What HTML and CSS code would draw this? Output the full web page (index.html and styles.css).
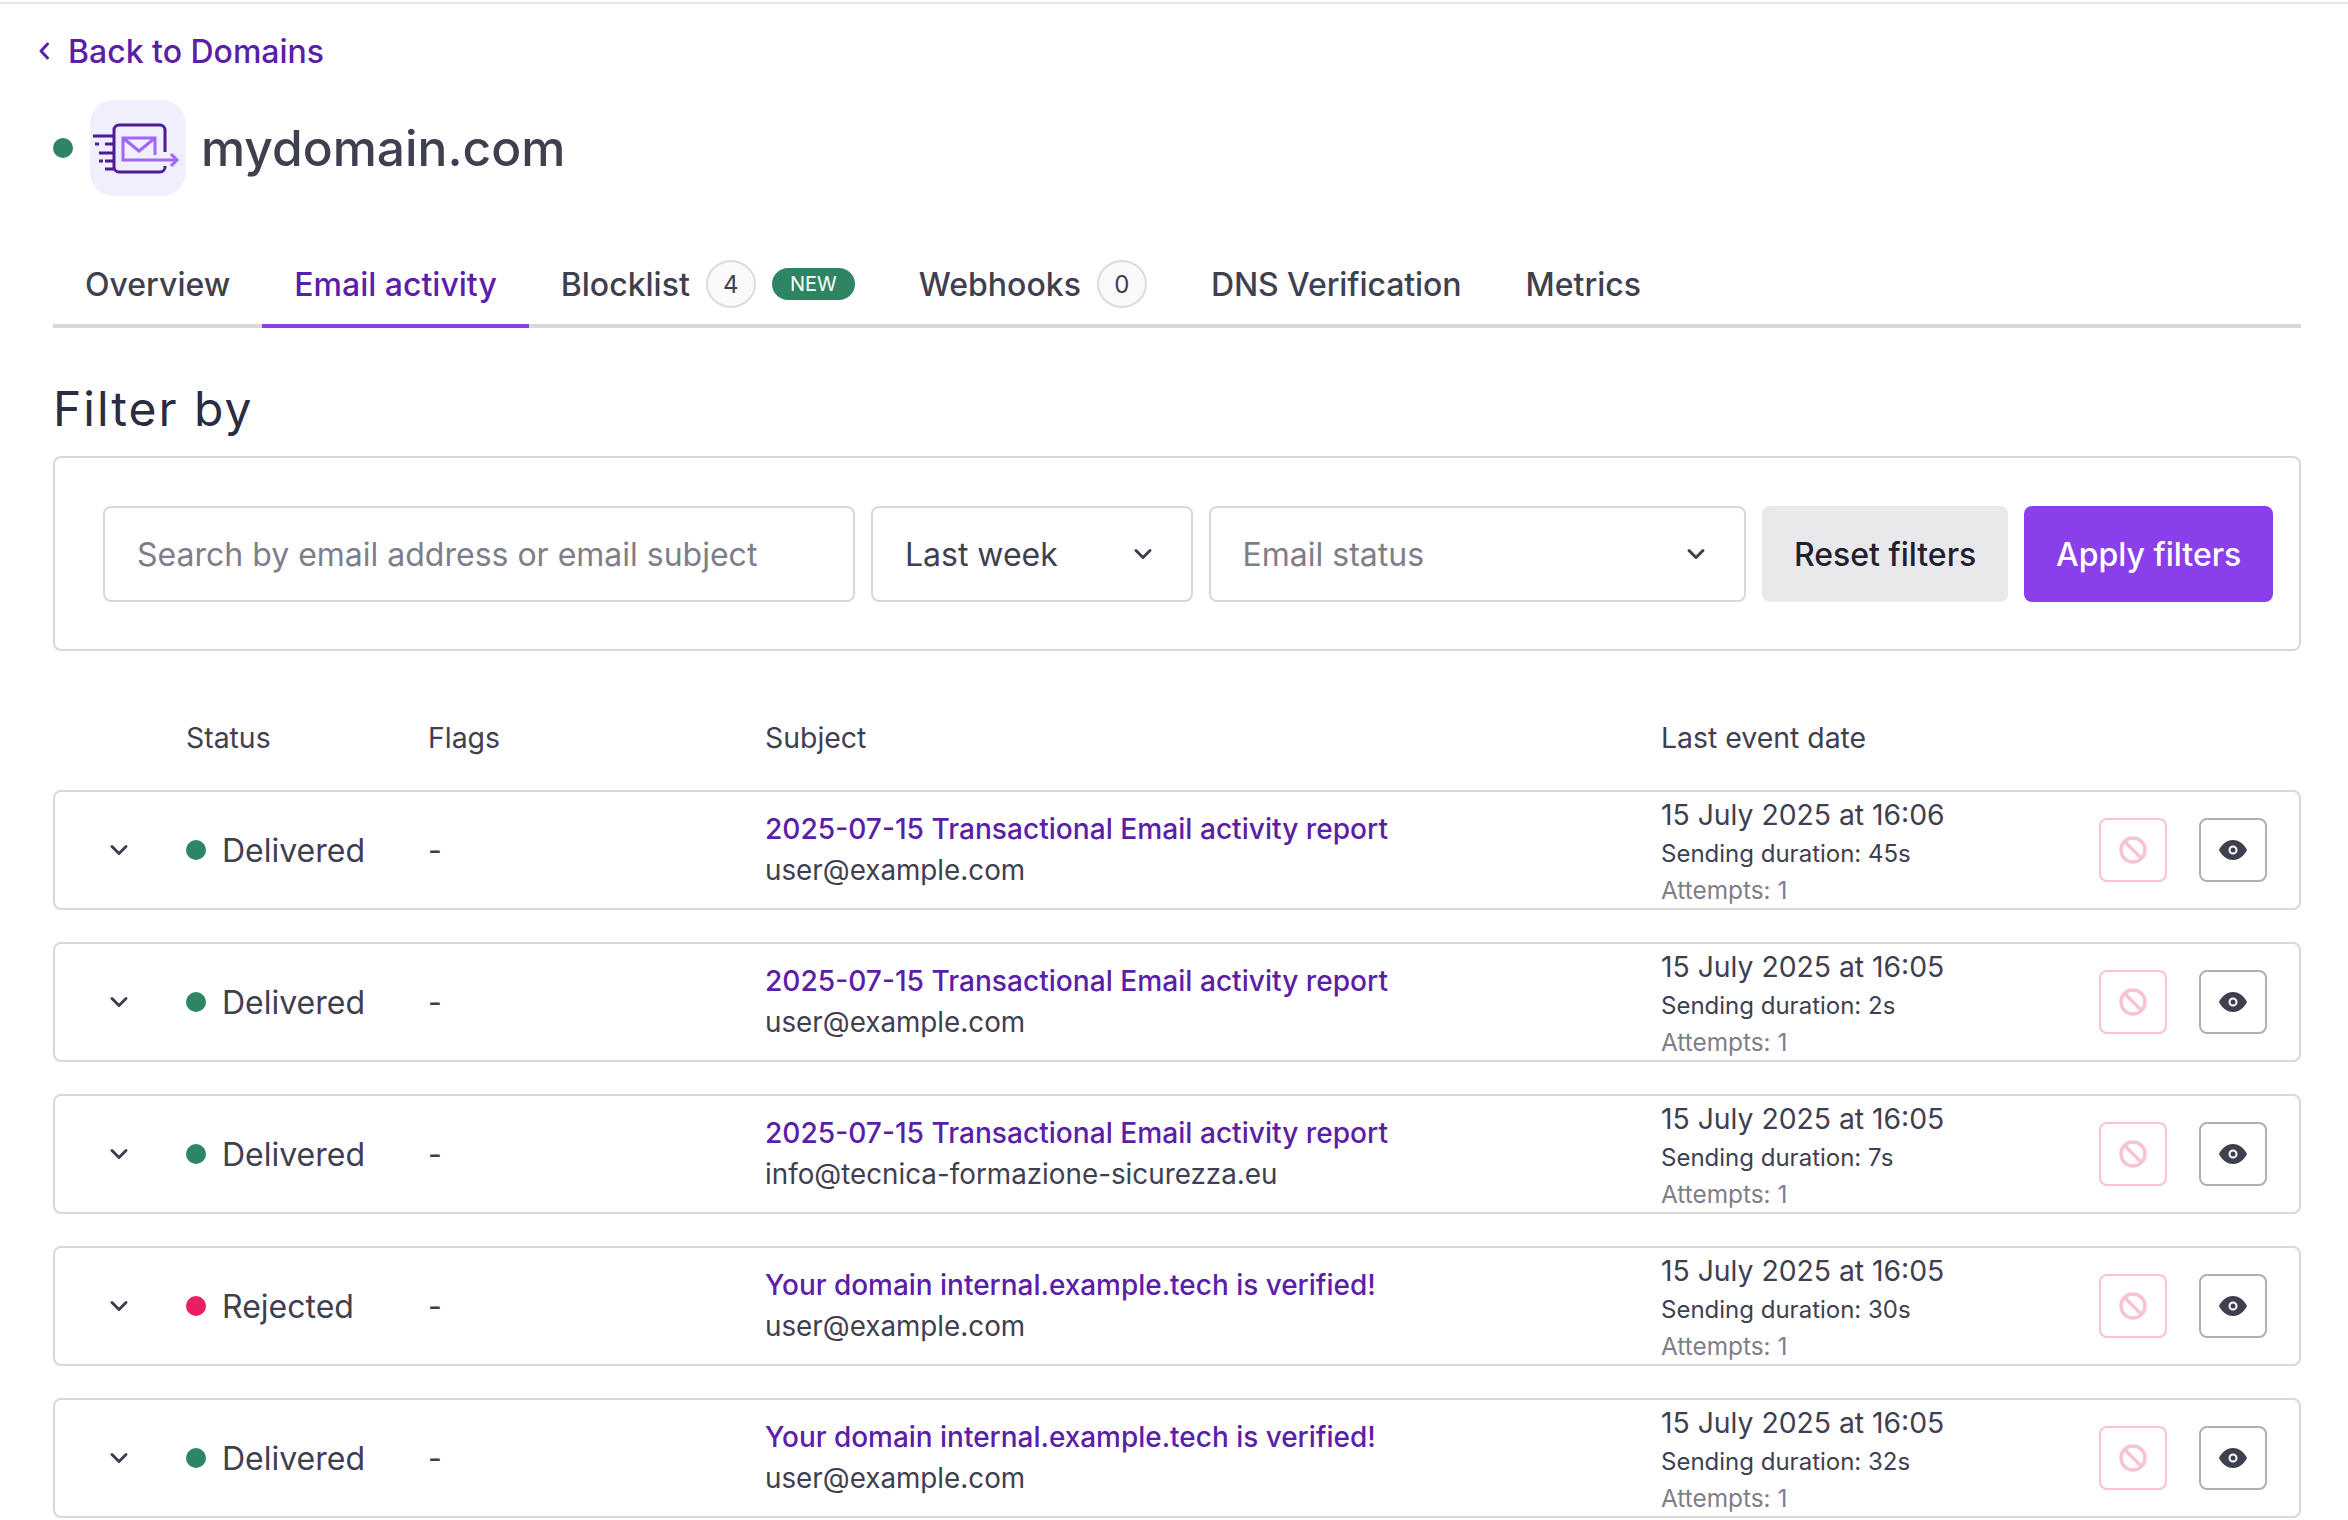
FILE: index.html
```html
<!DOCTYPE html>
<html lang="en">
<head>
<meta charset="utf-8">
<title>mydomain.com</title>
<link rel="stylesheet" href="styles.css">
</head>
<body>
<svg class="defs" width="0" height="0" aria-hidden="true">
  <symbol id="chev" viewBox="0 0 24 24"><path d="M5 8.5l7 7 7-7" fill="none" stroke="currentColor" stroke-width="3" stroke-linecap="round" stroke-linejoin="round"/></symbol>
  <symbol id="ban" viewBox="0 0 28 28"><circle cx="14" cy="14" r="12" fill="none" stroke="currentColor" stroke-width="3.500"/><path d="M6 6l16 16" stroke="currentColor" stroke-width="3.500"/></symbol>
  <symbol id="eye" viewBox="0 0 28 20"><path fill-rule="evenodd" d="M14 0C7.5 0 2.6 4.6 0 10c2.6 5.4 7.5 10 14 10s11.400-4.600 14-10C25.400 4.600 20.500 0 14 0zm0 14.500a4.500 4.500 0 1 1 0-9 4.500 4.500 0 0 1 0 9z" fill="currentColor"/><circle cx="14" cy="10" r="2.500" fill="currentColor"/></symbol>
</svg>
<main class="page">
  <a class="back"><svg class="back-icon" viewBox="0 0 12 20"><path d="M9.500 3L3 10l6.500 7" fill="none" stroke="currentColor" stroke-width="3" stroke-linecap="round" stroke-linejoin="round"/></svg>Back to Domains</a>
  <header class="title-row">
    <span class="dot dot-green title-dot"></span>
    <span class="logo">
      <svg viewBox="0 0 96 96" width="96" height="96" fill="none">
        <path d="M75 52V30a5 5 0 0 0-5-5H29a5 5 0 0 0-5 5v37a5 5 0 0 0 5 5h41a5 5 0 0 0 5-5v-1" stroke="#4c1d95" stroke-width="3"/>
        <path d="M3 36h21M5 44h4M15 44h9M9 53h15M9 61h4M15 61h9M15 69h9" stroke="#4c1d95" stroke-width="3"/>
        <path d="M65 55V38H33v22h53M33 38l16 13 16-13" stroke="#9f67f5" stroke-width="3"/>
        <path d="M81 54l6 6-6 6" stroke="#9f67f5" stroke-width="3"/>
      </svg>
    </span>
    <h1 class="domain">mydomain.com</h1>
  </header>
  <nav class="tabs">
    <a class="tab">Overview</a>
    <a class="tab tab-active">Email activity</a>
    <a class="tab">Blocklist<span class="count">4</span><span class="new">NEW</span></a>
    <a class="tab">Webhooks<span class="count">0</span></a>
    <a class="tab tab-tight">DNS Verification</a>
    <a class="tab">Metrics</a>
  </nav>
  <h2 class="filter-title">Filter by</h2>
  <section class="filters">
    <div class="field field-search placeholder">Search by email address or email subject</div>
    <div class="field field-period">Last week<svg class="chev-sm"><use href="#chev"/></svg></div>
    <div class="field field-status placeholder">Email status<svg class="chev-sm chev-dark"><use href="#chev"/></svg></div>
    <button class="btn btn-reset">Reset filters</button>
    <button class="btn btn-apply">Apply filters</button>
  </section>
  <div class="grid head">
    <span></span><span>Status</span><span>Flags</span><span>Subject</span><span>Last event date</span>
  </div>
  <div class="rows">
    <article class="grid row">
      <svg class="chev"><use href="#chev"/></svg>
      <div class="status"><span class="dot dot-green"></span>Delivered</div>
      <div class="flags">-</div>
      <div class="subject"><a class="subj-link">2025-07-15 Transactional Email activity report</a><span class="addr">user@example.com</span></div>
      <div class="event"><span class="date">15 July 2025 at 16:06</span><span class="dur">Sending duration: 45s</span><span class="att">Attempts: 1</span></div>
      <div class="actions"><span class="act act-ban"><svg class="i-ban"><use href="#ban"/></svg></span><span class="act act-eye"><svg class="i-eye"><use href="#eye"/></svg></span></div>
    </article>
    <article class="grid row">
      <svg class="chev"><use href="#chev"/></svg>
      <div class="status"><span class="dot dot-green"></span>Delivered</div>
      <div class="flags">-</div>
      <div class="subject"><a class="subj-link">2025-07-15 Transactional Email activity report</a><span class="addr">user@example.com</span></div>
      <div class="event"><span class="date">15 July 2025 at 16:05</span><span class="dur">Sending duration: 2s</span><span class="att">Attempts: 1</span></div>
      <div class="actions"><span class="act act-ban"><svg class="i-ban"><use href="#ban"/></svg></span><span class="act act-eye"><svg class="i-eye"><use href="#eye"/></svg></span></div>
    </article>
    <article class="grid row">
      <svg class="chev"><use href="#chev"/></svg>
      <div class="status"><span class="dot dot-green"></span>Delivered</div>
      <div class="flags">-</div>
      <div class="subject"><a class="subj-link">2025-07-15 Transactional Email activity report</a><span class="addr">info@tecnica-formazione-sicurezza.eu</span></div>
      <div class="event"><span class="date">15 July 2025 at 16:05</span><span class="dur">Sending duration: 7s</span><span class="att">Attempts: 1</span></div>
      <div class="actions"><span class="act act-ban"><svg class="i-ban"><use href="#ban"/></svg></span><span class="act act-eye"><svg class="i-eye"><use href="#eye"/></svg></span></div>
    </article>
    <article class="grid row">
      <svg class="chev"><use href="#chev"/></svg>
      <div class="status"><span class="dot dot-red"></span>Rejected</div>
      <div class="flags">-</div>
      <div class="subject"><a class="subj-link subj-short">Your domain internal.example.tech is verified!</a><span class="addr">user@example.com</span></div>
      <div class="event"><span class="date">15 July 2025 at 16:05</span><span class="dur">Sending duration: 30s</span><span class="att">Attempts: 1</span></div>
      <div class="actions"><span class="act act-ban"><svg class="i-ban"><use href="#ban"/></svg></span><span class="act act-eye"><svg class="i-eye"><use href="#eye"/></svg></span></div>
    </article>
    <article class="grid row">
      <svg class="chev"><use href="#chev"/></svg>
      <div class="status"><span class="dot dot-green"></span>Delivered</div>
      <div class="flags">-</div>
      <div class="subject"><a class="subj-link subj-short">Your domain internal.example.tech is verified!</a><span class="addr">user@example.com</span></div>
      <div class="event"><span class="date">15 July 2025 at 16:05</span><span class="dur">Sending duration: 32s</span><span class="att">Attempts: 1</span></div>
      <div class="actions"><span class="act act-ban"><svg class="i-ban"><use href="#ban"/></svg></span><span class="act act-eye"><svg class="i-eye"><use href="#eye"/></svg></span></div>
    </article>
  </div>
</main>
</body>
</html>
```
FILE: styles.css
```css
* { box-sizing: border-box; }
html, body { margin: 0; height: 100%; overflow: hidden; background: #fff; }
body { font-family: Inter, "Liberation Sans", sans-serif; color: #3f404f; }
.defs { position: absolute; }
.page { border-top: 2px solid #e8e8ea; margin-top: 2px; padding: 0 47px 0 53px; }
.back { display: flex; align-items: center; gap: 18px; height: 92px; margin-left: -15px; padding-top: 2px; font-size: 32px; font-weight: 500; color: #5b1ea8; }
.back-icon { width: 12px; height: 20px; }
.title-row { display: flex; align-items: center; margin-top: 4px; height: 96px; }
.dot { display: inline-block; width: 20px; height: 20px; border-radius: 50%; flex: none; }
.dot-green { background: #2e8564; }
.dot-red { background: #e91e63; }
.title-dot { margin-right: 17px; }
.logo { width: 96px; height: 96px; border-radius: 24px; background: #f1eefd; display: block; }
.logo svg { display: block; }
.domain { margin: 0 0 0 15px; font-size: 49.700px; font-weight: 500; color: #3f404f; }
.tabs { display: flex; margin-top: 54px; height: 78px; border-bottom: 4px solid #d8d8da; }
.tab { display: flex; align-items: center; padding: 0 32px 6px; height: 78px; border-bottom: 4px solid transparent; font-size: 32px; font-weight: 500; color: #3f404f; white-space: nowrap; }
.tab-tight { letter-spacing: -0.08px; }
.tab-active { color: #5b1ea8; border-bottom-color: #8b3fea; }
.count { display: inline-flex; align-items: center; justify-content: center; width: 50px; height: 48px; margin-left: 16px; border: 2px solid #dcdcde; border-radius: 50%; background: #fafafa; font-size: 24px; font-weight: 400; }
.new { display: inline-flex; align-items: center; justify-content: center; width: 83px; height: 32px; margin-left: 16px; border-radius: 16px; background: #2e8564; color: #fff; font-size: 20px; font-weight: 400; }
.filter-title { margin: 53px 0 0; height: 56px; line-height: 56px; font-size: 48px; font-weight: 400; letter-spacing: 2px; color: #2b2c40; }
.filters { display: flex; gap: 16px; margin-top: 19px; height: 195px; padding: 48px 26px 48px 48px; border: 2px solid #d8d8da; border-radius: 8px; }
.field { display: flex; align-items: center; justify-content: space-between; height: 96px; padding: 0 32px; border: 2px solid #d8d8da; border-radius: 8px; font-size: 32px; color: #3f404f; }
.placeholder { color: #7d7e8a; }
.field-search { width: 753px; }
.field-period { width: 322px; }
.field-status { width: 538px; }
.chev-sm { width: 24px; height: 24px; margin-right: 4px; }
.chev-dark { color: #3f404f; }
.btn { height: 96px; border: 0; border-radius: 8px; font-family: inherit; font-size: 32px; font-weight: 500; padding: 0; }
.btn-reset { width: 247px; background: #e9e9eb; color: #1f2030; }
.btn-apply { width: 249px; background: #8b3fea; color: #fff; }
.grid { display: grid; grid-template-columns: 131px 242px 337px 896px 1fr; align-items: center; }
.head { height: 60px; margin-top: 56px; font-size: 28.400px; color: #3f404f; padding-left: 2px; }
.rows { display: flex; flex-direction: column; gap: 32px; margin-top: 23px; }
.row { position: relative; height: 120px; border: 2px solid #d8d8da; border-radius: 8px; grid-template-columns: 131px 242px 337px 896px 1fr auto; }
.chev { width: 24px; height: 24px; margin-left: 52px; color: #3f404f; }
.status { display: flex; align-items: center; gap: 16px; font-size: 32px; }
.flags { font-size: 30px; }
.subject { display: flex; flex-direction: column; gap: 4px; }
.subj-link { font-size: 28.130px; font-weight: 500; color: #5b1ea8; line-height: 37px; }
.subj-short { font-size: 27.950px; }
.addr { font-size: 27.800px; line-height: 37px; }
.event { display: flex; flex-direction: column; padding-top: 4px; }
.date { font-size: 28.300px; line-height: 38px; }
.dur { font-size: 24px; line-height: 38px; padding-top: 1px; }
.att { font-size: 24.400px; line-height: 35px; color: #7d7e8a; }
.actions { display: flex; gap: 32px; padding-right: 32px; }
.act { display: flex; align-items: center; justify-content: center; width: 68px; height: 64px; border: 2px solid; border-radius: 8px; }
.act-ban { border-color: #f9c3d6; color: #f9c3d6; }
.act-eye { border-color: #b0b0b2; color: #3f404f; }
.i-ban { width: 28px; height: 28px; }
.i-eye { width: 28px; height: 20px; }
```
